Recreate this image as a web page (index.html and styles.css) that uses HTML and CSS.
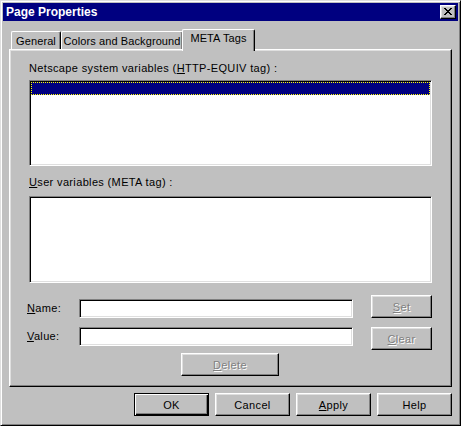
FILE: index.html
```html
<!DOCTYPE html>
<html>
<head>
<meta charset="utf-8">
<title>Page Properties</title>
<link rel="stylesheet" href="styles.css">
</head>
<body>
<div class="window">
  <div class="titlebar">
    <span class="title">Page Properties</span>
    <div class="close">
      <svg width="8" height="7" viewBox="0 0 8 7" shape-rendering="crispEdges"><path fill="#000" d="M0 0h2v1H0zM6 0h2v1H6zM1 1h2v1H1zM5 1h2v1H5zM2 2h4v1H2zM3 3h2v1H3zM2 4h4v1H2zM1 5h2v1H1zM5 5h2v1H5zM0 6h2v1H0zM6 6h2v1H6z"/></svg>
    </div>
  </div>
  <div class="body">
    <div class="tabs">
      <div class="tab tab-general">General</div>
      <div class="tab tab-colors">Colors and Background</div>
      <div class="tab tab-meta active">META Tags</div>
    </div>
    <div class="panel">
      <div class="label">Netscape system variables (<u>H</u>TTP-EQUIV tag) :</div>
      <div class="listbox list1"><div class="row selected"></div></div>
      <div class="label label2"><u>U</u>ser variables (META tag) :</div>
      <div class="listbox list2"></div>
      <div class="formrow r1">
        <div class="lbl"><u>N</u>ame:</div>
        <div class="field"></div>
        <div class="btn side disabled"><span><u>S</u>et</span></div>
      </div>
      <div class="formrow r2">
        <div class="lbl"><u>V</u>alue:</div>
        <div class="field"></div>
        <div class="btn side disabled"><span><u>C</u>lear</span></div>
      </div>
      <div class="delrow">
        <div class="btn delete disabled"><span><u>D</u>elete</span></div>
      </div>
    </div>
    <div class="buttons">
      <div class="btn default">OK</div>
      <div class="btn">Cancel</div>
      <div class="btn"><span><u>A</u>pply</span></div>
      <div class="btn">Help</div>
    </div>
  </div>
</div>
</body>
</html>
```
FILE: styles.css
```css
* { box-sizing: border-box; }
html, body { margin: 0; padding: 0; background: #c0c0c0; }
body {
  font-family: "Liberation Sans", Arial, sans-serif;
  font-size: 11px;
  letter-spacing: 0.35px;
  color: #000;
}
.window {
  width: 461px;
  height: 426px;
  background: #c0c0c0;
  border: 1px solid;
  border-color: #dfdfdf #000 #000 #dfdfdf;
  box-shadow: inset 1px 1px #fff, inset -1px -1px #808080;
  padding: 2px;
  display: flex;
  flex-direction: column;
}
.titlebar {
  height: 18px;
  background: #000080;
  display: flex;
  align-items: center;
  padding-left: 3px;
  padding-right: 2px;
}
.title {
  color: #fff;
  font-weight: bold;
  font-size: 12px;
  letter-spacing: 0;
  flex: 1;
  white-space: nowrap;
}
.close {
  width: 16px;
  height: 14px;
  background: #c0c0c0;
  border: 1px solid;
  border-color: #fff #000 #000 #fff;
  box-shadow: inset -1px -1px #808080, inset 1px 1px #dfdfdf;
  display: flex;
  align-items: center;
  justify-content: center;
  padding-bottom: 1px;
}
.close svg { display: block; }
.body {
  padding: 0 6px;
  flex: 1;
  display: flex;
  flex-direction: column;
}
.tabs {
  display: flex;
  align-items: flex-end;
  height: 20px;
  margin-top: 8px;
  padding-left: 2px;
  letter-spacing: 0.1px;
}
.tab {
  height: 18px;
  padding-top: 3px;
  line-height: 13px;
  text-align: center;
  white-space: nowrap;
  border: 1px solid;
  border-bottom: none;
  border-color: #fff #000 #000 #fff;
  box-shadow: inset -1px 0 #808080;
  border-radius: 2px 2px 0 0;
  background: #c0c0c0;
}
.tab-general { width: 50px; }
.tab-colors { width: 122px; }
.tab.active {
  width: 73px;
  height: 22px;
  margin-bottom: -2px;
  margin-left: -1px;
  padding-top: 2px;
  position: relative;
  z-index: 1;
}
.panel {
  height: 338px;
  border: 1px solid;
  border-color: #fff #000 #000 #fff;
  box-shadow: inset -1px -1px #808080, inset 1px 1px #dfdfdf;
  padding: 12px 19px 10px;
  display: flex;
  flex-direction: column;
}
.label {
  line-height: 13px;
  height: 13px;
  white-space: nowrap;
}
.listbox {
  background: #fff;
  border: 1px solid;
  border-color: #808080 #fff #fff #808080;
  box-shadow: inset 1px 1px #000, inset -1px -1px #dfdfdf;
  padding: 1px;
}
.list1 { margin-top: 5px; height: 86px; }
.list2 { margin-top: 7px; height: 87px; }
.label2 { margin-top: 10px; }
.row.selected {
  height: 13px;
  background: #000080;
  border: 1px dotted #ffff00;
}
.formrow {
  display: flex;
  align-items: flex-start;
  height: 23px;
}
.r1 { margin-top: 12px; }
.r2 { margin-top: 9px; }
.lbl {
  width: 52px;
  margin-left: -2px;
  line-height: 19px;
  height: 19px;
}
.r1 .lbl, .r1 .field { margin-top: 4px; }
.field {
  width: 275px;
  height: 19px;
  background: #fff;
  border: 1px solid;
  border-color: #808080 #fff #fff #808080;
  box-shadow: inset 1px 1px #000, inset -1px -1px #dfdfdf;
}
.btn {
  height: 23px;
  display: flex;
  align-items: center;
  justify-content: center;
  white-space: nowrap;
  background: #c0c0c0;
  border: 1px solid;
  border-color: #fff #000 #000 #fff;
  box-shadow: inset -1px -1px #808080, inset 1px 1px #dfdfdf;
}
.btn.side { width: 61px; margin-left: 18px; }
.disabled { color: #808080; text-shadow: 1px 1px 0 #fff; }
.delrow {
  margin-top: 3px;
  padding-left: 152px;
}
.btn.delete { width: 98px; }
.buttons {
  display: flex;
  justify-content: flex-end;
  gap: 6px;
  margin-top: 6px;
}
.buttons .btn { width: 75px; }
.btn.default {
  border-color: #000;
  box-shadow: inset 1px 1px #fff, inset -1px -1px #000, inset -2px -2px #808080;
}
```
